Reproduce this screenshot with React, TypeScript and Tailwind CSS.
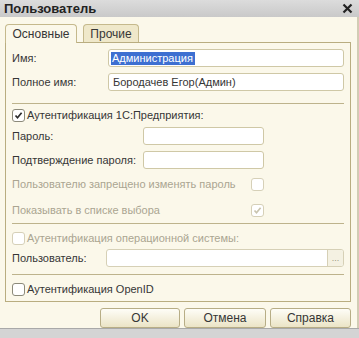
import React from "react";

function CheckBox({ checked, disabled }: { checked?: boolean; disabled?: boolean }) {
  return (
    <span
      className={
        "flex h-[13px] w-[13px] shrink-0 items-center justify-center rounded-[3px] border bg-white " +
        (disabled ? "border-[#d6d0b8]" : "border-[#8c8a7a]")
      }
    >
      {checked && (
        <svg width="9" height="9" viewBox="0 0 9 9">
          <path
            d="M1.5 4.5 L3.5 6.7 L7.6 1.8"
            fill="none"
            stroke={disabled ? "#c9c4ae" : "#2b2b2b"}
            strokeWidth="1.7"
          />
        </svg>
      )}
    </span>
  );
}

function Field({ className, children }: { className?: string; children?: React.ReactNode }) {
  return (
    <div
      className={
        "flex h-[18px] items-center rounded-[3px] border border-[#cfc8a6] bg-white px-[2px] " +
        (className ?? "")
      }
    >
      {children}
    </div>
  );
}

function Sep({ className }: { className: string }) {
  return <div className={"h-px shrink-0 bg-[#bdb38c] " + className} />;
}

function Btn({ label, w }: { label: string; w: string }) {
  return (
    <div
      className={
        "flex h-[20px] items-center justify-center rounded-[3px] border border-[#b7ad86] bg-gradient-to-b from-[#fefdf7] to-[#ebe4c6] text-[12px] " +
        w
      }
    >
      {label}
    </div>
  );
}

export default function App() {
  return (
    <div
      className="flex h-[338px] w-[359px] flex-col overflow-hidden whitespace-nowrap bg-[#fbf8ea] text-[11px] leading-none text-[#363636]"
      style={{ fontFamily: '"Liberation Sans", Arial, sans-serif' }}
    >
      <div className="flex h-[17px] shrink-0 items-center justify-between bg-gradient-to-b from-[#dcdcdc] to-[#c9c9c9] pl-[4px] pr-[6px]">
        <span className="text-[13px] font-bold text-[#222]">Пользователь</span>
        <svg width="11" height="11" viewBox="0 0 11 11">
          <path d="M1.5 1.5 L9.5 9.5 M9.5 1.5 L1.5 9.5" stroke="#222" strokeWidth="2.2" />
        </svg>
      </div>

      <div className="flex flex-1 border-r-2 border-[#d2ccb4] pl-[5px] pr-[5px] pt-[6px]">
        <div className="flex w-[346px] flex-col">
          <div className="flex h-[19px] items-end gap-[6px] text-[12px]">
            <div className="relative z-10 -mb-px flex h-[19px] w-[72px] items-center justify-center rounded-t-[4px] border border-b-0 border-[#c5b98c] bg-[#fbf8ea]">
              Основные
            </div>
            <div className="flex h-[18px] w-[56px] items-center justify-center rounded-t-[4px] border border-b-0 border-[#c5b98c] bg-[#efe8ca]">
              Прочие
            </div>
          </div>

          <div className="flex h-[260px] shrink-0 flex-col border border-[#b9ad80] px-[6px] pt-[6px]">
            <div className="flex h-[18px] items-center">
              <span className="w-[96px]">Имя:</span>
              <Field className="flex-1">
                <span className="bg-[#3d6fd1] py-px pl-px pr-[2px] text-white">Администрация</span>
              </Field>
            </div>
            <div className="mt-[6px] flex h-[18px] items-center">
              <span className="w-[96px]">Полное имя:</span>
              <Field className="flex-1">
                <span className="pl-[2px]">Бородачев Егор(Админ)</span>
              </Field>
            </div>

            <Sep className="mt-[12px]" />

            <div className="mt-[5px] flex h-[13px] items-center gap-[2px]">
              <CheckBox checked />
              <span>Аутентификация 1С:Предприятия:</span>
            </div>
            <div className="mt-[5px] flex h-[18px] items-center">
              <span className="w-[131px]">Пароль:</span>
              <Field className="w-[121px]" />
            </div>
            <div className="mt-[6px] flex h-[18px] items-center">
              <span className="w-[131px]">Подтверждение пароля:</span>
              <Field className="w-[121px]" />
            </div>
            <div className="mt-[9px] flex h-[13px] items-center text-[#aaa591]">
              <span className="w-[239px]">Пользователю запрещено изменять пароль</span>
              <CheckBox disabled />
            </div>
            <div className="mt-[13px] flex h-[13px] items-center text-[#aaa591]">
              <span className="w-[239px]">Показывать в списке выбора</span>
              <CheckBox checked disabled />
            </div>

            <Sep className="mt-[6px]" />

            <div className="mt-[8px] flex h-[13px] items-center gap-[2px] text-[#aaa591]">
              <CheckBox disabled />
              <span>Аутентификация операционной системы:</span>
            </div>
            <div className="mt-[4px] flex h-[18px] items-center">
              <span className="w-[94px]">Пользователь:</span>
              <div className="flex h-[18px] flex-1 overflow-hidden rounded-[3px] border border-[#d6d0b6] bg-white">
                <div className="flex-1" />
                <div className="flex w-[16px] items-end justify-center border-l border-[#d6d0b6] bg-[#f4f1e2] pb-[3px] text-[9px] text-[#9b9682]">
                  ...
                </div>
              </div>
            </div>

            <Sep className="mt-[7px]" />

            <div className="mt-[8px] flex h-[13px] items-center gap-[2px]">
              <CheckBox />
              <span>Аутентификация OpenID</span>
            </div>
          </div>

          <div className="mt-[6px] flex justify-end gap-[4px]">
            <Btn label="OK" w="w-[80px]" />
            <Btn label="Отмена" w="w-[82px]" />
            <Btn label="Справка" w="w-[81px]" />
          </div>
        </div>
      </div>

      <div className="h-[10px] shrink-0 border-t border-[#a9a9a9] bg-[#d4d4d4]" />
    </div>
  );
}
